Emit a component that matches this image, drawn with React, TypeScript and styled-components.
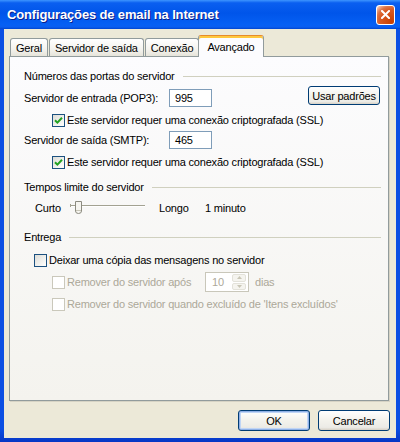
import React from "react";
import styled, { createGlobalStyle, css } from "styled-components";

const GlobalStyle = createGlobalStyle`
  html, body { margin: 0; padding: 0; background: #ffffff; }
  body {
    font-family: "Liberation Sans", Arial, sans-serif;
    font-size: 11px;
    color: #000;
  }
  * { box-sizing: border-box; }
`;

const Window = styled.div`
  width: 400px;
  height: 442px;
  display: flex;
  flex-direction: column;
  background: linear-gradient(180deg, #0b4fe3 0%, #0b4fe3 97%, #0736c4 100%);
  overflow: hidden;
`;

const TitleBar = styled.div`
  flex: none;
  height: 29px;
  display: flex;
  align-items: center;
  padding: 0 5px 0 7px;
  background: linear-gradient(
    180deg,
    #3d95ff 0%,
    #0a5ff0 10%,
    #0055ea 45%,
    #0660f4 85%,
    #0a5ef0 93%,
    #0045d0 100%
  );
`;

const Title = styled.div`
  flex: 1;
  font-family: "Liberation Sans", Arial, sans-serif;
  font-weight: bold;
  font-size: 13px;
  letter-spacing: -0.15px;
  color: #ffffff;
  text-shadow: 1px 1px 0 #0a1e8a;
  white-space: nowrap;
`;

const CloseButton = styled.div`
  width: 19px;
  height: 20px;
  border: 1px solid #ffffff;
  border-radius: 3px;
  display: flex;
  align-items: center;
  justify-content: center;
  background: radial-gradient(
    circle at 85% 85%,
    #c94000 0%,
    #d95a22 55%,
    #dc7446 72%,
    #f3b89c 90%,
    #ffffff 100%
  );
`;

const Body = styled.div`
  flex: 1;
  margin: 0 4px 4px;
  background: #ece9d8;
  display: flex;
  flex-direction: column;
  padding: 6px 6px 0 5px;
`;

const TabStrip = styled.div`
  height: 21px;
  display: flex;
  align-items: flex-end;
  padding-left: 1px;
  position: relative;
  z-index: 1;
`;

const Tab = styled.div<{ $active?: boolean }>`
  height: 18px;
  padding: 0 5px;
  margin-right: 1px;
  display: flex;
  align-items: center;
  justify-content: center;
  white-space: nowrap;
  letter-spacing: -0.2px;
  border: 1px solid #919b9c;
  border-bottom: none;
  border-radius: 3px 3px 0 0;
  background: linear-gradient(180deg, #ffffff 0%, #f4f3ee 60%, #e6e4da 100%);
  ${(p) =>
    p.$active &&
    css`
      height: 22px;
      padding: 1px 8px 0;
      margin: 0 -1px -1px -2px;
      border-top: 1px solid #e68b2c;
      box-shadow: inset 0 2px 0 #ffc83c;
      background: #fcfcfe;
    `}
`;

const Panel = styled.div`
  height: 345px;
  margin-right: 1px;
  border: 1px solid #919b9c;
  background: linear-gradient(180deg, #fcfcfe 0%, #f4f3ee 100%);
  box-shadow: 1px 1px 0 #d6d3c4;
  padding: 9px 7px 0 14px;
  display: flex;
  flex-direction: column;
`;

const Row = styled.div<{ $mt?: number; $indent?: number }>`
  height: 20px;
  display: flex;
  align-items: center;
  margin-top: ${(p) => p.$mt ?? 0}px;
  padding-left: ${(p) => p.$indent ?? 0}px;
`;

const Text = styled.span<{ $disabled?: boolean; $w?: number; $ml?: number }>`
  white-space: nowrap;
  letter-spacing: -0.2px;
  color: ${(p) => (p.$disabled ? "#aca899" : "#000000")};
  ${(p) => (p.$w ? `width: ${p.$w}px; flex: none;` : "")}
  margin-left: ${(p) => p.$ml ?? 0}px;
`;

const Rule = styled.div`
  flex: 1;
  height: 0;
  margin-left: 8px;
  border-top: 1px solid #d0d0bf;
`;

const TextInput = styled.div`
  width: 43px;
  height: 18px;
  border: 1px solid #7f9db9;
  background: #ffffff;
  padding-left: 5px;
  display: flex;
  align-items: center;
  letter-spacing: -0.2px;
`;

const Button = styled.div<{ $default?: boolean }>`
  width: 72px;
  height: 21px;
  border: 1px solid #003c74;
  border-radius: 3px;
  display: flex;
  align-items: center;
  justify-content: center;
  letter-spacing: -0.2px;
  background: linear-gradient(180deg, #ffffff 0%, #f3f2ec 50%, #ecebe6 86%, #d6d0c5 100%);
  ${(p) =>
    p.$default &&
    css`
      box-shadow: inset 0 0 0 1px #8fb0e6, inset 0 0 0 2px #c0d5f5;
    `}
`;

const DefaultsButton = styled(Button)`
  height: 19px;
  margin-left: auto;
  margin-right: 1px;
  align-self: flex-start;
  margin-top: -2px;
`;

const Box = styled.span<{ $disabled?: boolean }>`
  width: 13px;
  height: 13px;
  flex: none;
  display: flex;
  align-items: center;
  justify-content: center;
  border: 1px solid ${(p) => (p.$disabled ? "#cac8bb" : "#1c5180")};
  background: ${(p) =>
    p.$disabled ? "#ffffff" : "linear-gradient(135deg, #dcdcd7 0%, #fbfbf9 85%)"};
`;

const Spinner = styled.div`
  width: 44px;
  height: 20px;
  border: 1px solid #c9c7ba;
  background: #ffffff;
  display: flex;
  align-items: center;
  padding: 1px 2px 1px 6px;
  color: #aca899;
`;

const SpinValue = styled.span`
  flex: 1;
  letter-spacing: -0.2px;
`;

const SpinButtons = styled.div`
  width: 14px;
  height: 16px;
  display: flex;
  flex-direction: column;
  gap: 1px;
`;

const SpinButton = styled.div`
  flex: 1;
  border: 1px solid #e3e2da;
  border-radius: 2px;
  background: #f5f4ef;
  display: flex;
  align-items: center;
  justify-content: center;
`;

const Footer = styled.div`
  display: flex;
  justify-content: flex-end;
  gap: 8px;
  margin-top: 9px;
`;

const Check = () => (
  <svg width="9" height="9" viewBox="0 0 9 9">
    <path d="M1 4.2 L3.4 6.6 L8 1.8" fill="none" stroke="#21a121" strokeWidth="2" />
  </svg>
);

const Checkbox = ({ checked, disabled }: { checked?: boolean; disabled?: boolean }) => (
  <Box $disabled={disabled}>{checked ? <Check /> : null}</Box>
);

const CloseX = () => (
  <svg width="9" height="9" viewBox="0 0 9 9">
    <path d="M1 1 L8 8 M8 1 L1 8" stroke="#ffffff" strokeWidth="2" strokeLinecap="square" />
  </svg>
);

const Slider = () => (
  <svg width="76" height="20" viewBox="0 0 76 20" style={{ flex: "none" }}>
    <rect x="0" y="7" width="75" height="1" fill="#a3a292" />
    <rect x="0" y="8" width="75" height="1" fill="#ffffff" />
    <rect x="0" y="6" width="1" height="3" fill="#a3a292" />
    <path
      d="M5.5 3.5 H11.5 V13 Q11.5 15.5 8.5 15.5 Q5.5 15.5 5.5 13 Z"
      fill="#f6f5f0"
      stroke="#8c8b80"
    />
    <rect x="6" y="12" width="5" height="1" fill="#c8c6b8" />
  </svg>
);

const Arrow = ({ up }: { up?: boolean }) => (
  <svg width="5" height="3" viewBox="0 0 5 3">
    <path d={up ? "M0 3 L2.5 0 L5 3 Z" : "M0 0 L2.5 3 L5 0 Z"} fill="#c9c6b6" />
  </svg>
);

export default function App() {
  return (
    <>
      <GlobalStyle />
      <Window>
        <TitleBar>
          <Title>Configurações de email na Internet</Title>
          <CloseButton>
            <CloseX />
          </CloseButton>
        </TitleBar>
        <Body>
          <TabStrip>
            <Tab>Geral</Tab>
            <Tab>Servidor de saída</Tab>
            <Tab>Conexão</Tab>
            <Tab $active>Avançado</Tab>
          </TabStrip>
          <Panel>
            <Row>
              <Text>Números das portas do servidor</Text>
              <Rule />
            </Row>
            <Row $mt={2}>
              <Text $w={145}>Servidor de entrada (POP3):</Text>
              <TextInput>995</TextInput>
              <DefaultsButton>Usar padrões</DefaultsButton>
            </Row>
            <Row $mt={2} $indent={28}>
              <Checkbox checked />
              <Text $ml={2}>Este servidor requer uma conexão criptografada (SSL)</Text>
            </Row>
            <Row>
              <Text $w={145}>Servidor de saída (SMTP):</Text>
              <TextInput>465</TextInput>
            </Row>
            <Row $mt={2} $indent={28}>
              <Checkbox checked />
              <Text $ml={2}>Este servidor requer uma conexão criptografada (SSL)</Text>
            </Row>
            <Row $mt={5}>
              <Text>Tempos limite do servidor</Text>
              <Rule />
            </Row>
            <Row $mt={1} $indent={11}>
              <Text $w={35}>Curto</Text>
              <Slider />
              <Text $ml={13} $w={46}>Longo</Text>
              <Text>1 minuto</Text>
            </Row>
            <Row $mt={9}>
              <Text>Entrega</Text>
              <Rule />
            </Row>
            <Row $mt={3} $indent={10}>
              <Checkbox />
              <Text $ml={2}>Deixar uma cópia das mensagens no servidor</Text>
            </Row>
            <Row $mt={2} $indent={28}>
              <Checkbox disabled />
              <Text $disabled $ml={2} $w={138}>
                Remover do servidor após
              </Text>
              <Spinner>
                <SpinValue>10</SpinValue>
                <SpinButtons>
                  <SpinButton>
                    <Arrow up />
                  </SpinButton>
                  <SpinButton>
                    <Arrow />
                  </SpinButton>
                </SpinButtons>
              </Spinner>
              <Text $disabled $ml={6}>dias</Text>
            </Row>
            <Row $mt={2} $indent={28}>
              <Checkbox disabled />
              <Text $disabled $ml={2}>
                Remover do servidor quando excluído de 'Itens excluídos'
              </Text>
            </Row>
          </Panel>
          <Footer>
            <Button $default>OK</Button>
            <Button>Cancelar</Button>
          </Footer>
        </Body>
      </Window>
    </>
  );
}
